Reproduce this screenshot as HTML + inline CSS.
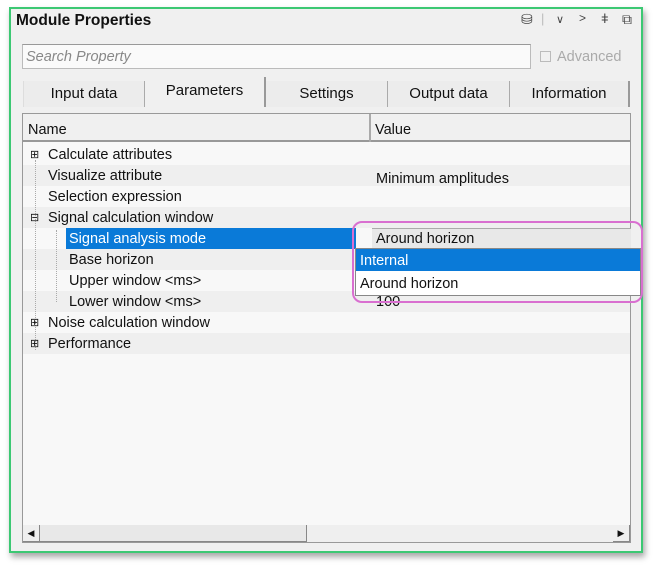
<!DOCTYPE html>
<html><head><style>
*{margin:0;padding:0;box-sizing:border-box}
body{width:653px;height:567px;background:#fff;font-family:"Liberation Sans",sans-serif;position:relative;overflow:hidden;color:#111}
.a{position:absolute}
.frame{left:9px;top:7px;width:634px;height:546px;border:2px solid #3cc873;background:#f0f0f0;box-shadow:2px 4px 6px rgba(0,0,0,.35)}
.t{font-size:14px;white-space:nowrap}
.tab{top:81px;height:26px;border-right:1px solid #aaa;font-size:15px;text-align:center;line-height:26px;background:#ececec}
.row{left:23px;width:607px;height:21px}
.lbl{font-size:14.5px;line-height:21px;white-space:nowrap;top:0}
.ic{position:absolute;top:11px;font-size:13px;color:#444}
</style></head><body>
<div class="a frame"></div>
<div class="a t" style="left:16px;top:12px;font-weight:bold;font-size:15.5px">Module Properties</div>
<div class="ic" style="left:521px;font-size:14px">⛁</div>
<div class="ic" style="left:541px;color:#bbb">|</div>
<div class="ic" style="left:556px;font-size:11px;top:13px">∨</div>
<div class="ic" style="left:579px;font-size:12px">&gt;</div>
<div class="ic" style="left:601px;font-size:13px">ǂ</div>
<div class="ic" style="left:622px;font-size:14px">⧉</div>
<div class="a" style="left:22px;top:44px;width:509px;height:25px;border:1px solid #bbb;border-top-color:#999;background:#fafafa"></div>
<div class="a t" style="left:26px;top:49px;font-style:italic;color:#888;font-size:14.5px">Search Property</div>
<div class="a" style="left:540px;top:51px;width:11px;height:11px;border:1px solid #bbb"></div>
<div class="a t" style="left:557px;top:49px;color:#aaa;font-size:14.5px">Advanced</div>
<div class="a tab" style="left:23px;width:122px;border-left:1px solid #ddd">Input data</div>
<div class="a tab" style="left:145px;top:77px;height:30px;width:121px;background:#f0f0f0;border-right:2px solid #999;line-height:28px">Parameters</div>
<div class="a tab" style="left:266px;width:122px">Settings</div>
<div class="a tab" style="left:388px;width:122px">Output data</div>
<div class="a tab" style="left:510px;width:120px;border-right:2px solid #999">Information</div>
<div class="a" style="left:22px;top:113px;width:609px;height:430px;border:1px solid #999;background:#f8f8f8"></div>
<div class="a" style="left:23px;top:114px;width:607px;height:28px;background:#f0f0f0;border-bottom:2px solid #999"></div>
<div class="a" style="left:369px;top:114px;width:2px;height:28px;background:#aaa"></div>
<div class="a lbl" style="left:28px;top:120px">Name</div>
<div class="a lbl" style="left:375px;top:120px">Value</div>
<div class="a row" style="top:144px;background:#f8f8f8"></div>
<div class="a row" style="top:165px;background:#efefef"></div>
<div class="a row" style="top:186px;background:#f8f8f8"></div>
<div class="a row" style="top:207px;background:#efefef"></div>
<div class="a row" style="top:249px;background:#efefef"></div>
<div class="a row" style="top:270px;background:#f8f8f8"></div>
<div class="a row" style="top:291px;background:#efefef"></div>
<div class="a row" style="top:312px;background:#f8f8f8"></div>
<div class="a row" style="top:333px;background:#efefef"></div>
<div class="a" style="left:66px;top:228px;width:290px;height:21px;background:#0a7ad8"></div>
<div class="a" style="left:372px;top:228px;width:259px;height:21px;background:#e8e8e8;border-top:1px solid #aaa"></div>
<div class="a" style="left:35px;top:160px;width:1px;height:190px;border-left:1px dotted #aaa"></div>
<div class="a" style="left:56px;top:230px;width:1px;height:72px;border-left:1px dotted #aaa"></div>
<div class="a lbl" style="left:30px;top:145px;font-size:11px">⊞</div>
<div class="a lbl" style="left:30px;top:208px;font-size:11px">⊟</div>
<div class="a lbl" style="left:30px;top:313px;font-size:11px">⊞</div>
<div class="a lbl" style="left:30px;top:334px;font-size:11px">⊞</div>
<div class="a lbl" style="left:48px;top:145px">Calculate attributes</div>
<div class="a lbl" style="left:48px;top:166px">Visualize attribute</div>
<div class="a lbl" style="left:376px;top:169px">Minimum amplitudes</div>
<div class="a lbl" style="left:48px;top:187px">Selection expression</div>
<div class="a lbl" style="left:48px;top:208px">Signal calculation window</div>
<div class="a lbl" style="left:69px;top:229px;color:#fff">Signal analysis mode</div>
<div class="a lbl" style="left:376px;top:229px">Around horizon</div>
<div class="a lbl" style="left:69px;top:250px">Base horizon</div>
<div class="a lbl" style="left:69px;top:271px">Upper window &lt;ms&gt;</div>
<div class="a lbl" style="left:69px;top:292px">Lower window &lt;ms&gt;</div>
<div class="a lbl" style="left:376px;top:292px">100</div>
<div class="a lbl" style="left:48px;top:313px">Noise calculation window</div>
<div class="a lbl" style="left:48px;top:334px">Performance</div>
<div class="a" style="left:355px;top:248px;width:286px;height:48px;background:#fff;border:1px solid #888"></div>
<div class="a" style="left:356px;top:249px;width:284px;height:22px;background:#0a7ad8"></div>
<div class="a lbl" style="left:360px;top:251px;color:#fff">Internal</div>
<div class="a lbl" style="left:360px;top:274px">Around horizon</div>
<div class="a" style="left:352px;top:221px;width:291px;height:82px;border:2px solid #d96fd0;border-radius:10px"></div>
<div class="a" style="left:23px;top:525px;width:607px;height:17px;background:#efefef"></div>
<div class="a" style="left:23px;top:525px;width:17px;height:17px;border-right:1px solid #888;border-bottom:1px solid #888;font-size:9px;text-align:center;line-height:17px">◀</div>
<div class="a" style="left:40px;top:525px;width:267px;height:17px;background:#e8e8e8;border-right:1px solid #888;border-bottom:1px solid #888"></div>
<div class="a" style="left:613px;top:525px;width:17px;height:17px;border-right:1px solid #888;border-bottom:1px solid #888;font-size:9px;text-align:center;line-height:17px">▶</div>
</body></html>
